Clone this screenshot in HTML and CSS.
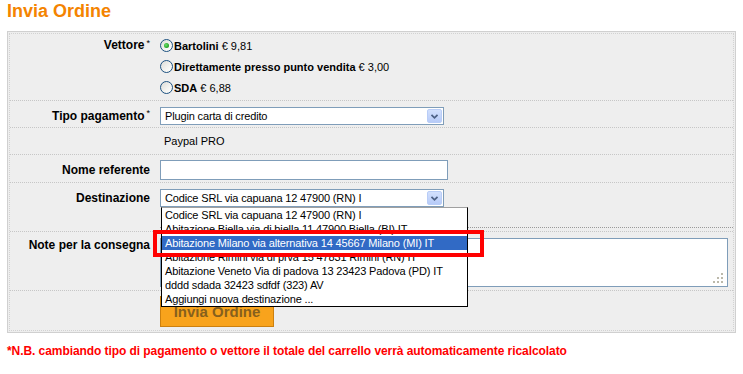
FILE: index.html
```html
<!DOCTYPE html>
<html lang="it">
<head>
    <meta charset="UTF-8">
    <title>Invia Ordine</title>
    <link rel="stylesheet" href="styles.css">
</head>
<body>
    <h1 class="title">Invia Ordine</h1>

    <div class="panel">
        <div class="panel-inner">
            <div class="row row-vettore">
                <div class="row-label">Vettore<span class="req">*</span></div>
                <div class="row-value">
                    <div class="radio-opt">
                        <span class="radio checked"><span class="radio-dot"></span></span>
                        <b>Bartolini</b>&nbsp;€ 9,81
                    </div>
                    <div class="radio-opt">
                        <span class="radio"></span>
                        <b>Direttamente presso punto vendita</b>&nbsp;€ 3,00
                    </div>
                    <div class="radio-opt">
                        <span class="radio"></span>
                        <b>SDA</b>&nbsp;€ 6,88
                    </div>
                </div>
            </div>

            <div class="row row-select">
                <div class="row-label">Tipo pagamento<span class="req">*</span></div>
                <div class="row-value">
                    <div class="select">
                        <span class="select-text">Plugin carta di credito</span>
                        <span class="select-arrow">
                            <svg width="15" height="15" viewBox="0 0 15 15"><polyline points="4,5.5 7.5,9 11,5.5" fill="none" stroke="#4d6185" stroke-width="2"/></svg>
                        </span>
                    </div>
                </div>
            </div>

            <div class="row row-info">
                <div class="row-label"></div>
                <div class="row-value">Paypal PRO</div>
            </div>

            <div class="row row-input">
                <div class="row-label">Nome referente</div>
                <div class="row-value">
                    <div class="input"></div>
                </div>
            </div>

            <div class="row row-dest">
                <div class="row-label">Destinazione</div>
                <div class="row-value">
                    <div class="select-wrap">
                        <div class="select">
                            <span class="select-text">Codice SRL via capuana 12 47900 (RN) I</span>
                            <span class="select-arrow">
                                <svg width="15" height="15" viewBox="0 0 15 15"><polyline points="4,5.5 7.5,9 11,5.5" fill="none" stroke="#4d6185" stroke-width="2"/></svg>
                            </span>
                        </div>
                        <ul class="dropdown">
                            <li>Codice SRL via capuana 12 47900 (RN) I</li>
                            <li>Abitazione Biella via di biella 11 47900 Biella (BI) IT</li>
                            <li class="active">Abitazione Milano via alternativa 14 45667 Milano (MI) IT</li>
                            <li>Abitazione Rimini via di prva 15 47831 Rimini (RN) IT</li>
                            <li>Abitazione Veneto Via di padova 13 23423 Padova (PD) IT</li>
                            <li>dddd sdada 32423 sdfdf (323) AV</li>
                            <li>Aggiungi nuova destinazione ...</li>
                        </ul>
                        <div class="highlight-box"></div>
                    </div>
                    <div class="dest-extra"></div>
                </div>
            </div>

            <div class="row row-note">
                <div class="row-label">Note per la consegna</div>
                <div class="row-value">
                    <div class="textarea">
                        <svg class="grip" width="11" height="11" viewBox="0 0 11 11">
                            <rect x="8" y="0" width="2" height="2" fill="#bcb9ab"/>
                            <rect x="4" y="4" width="2" height="2" fill="#bcb9ab"/>
                            <rect x="8" y="4" width="2" height="2" fill="#bcb9ab"/>
                            <rect x="0" y="8" width="2" height="2" fill="#bcb9ab"/>
                            <rect x="4" y="8" width="2" height="2" fill="#bcb9ab"/>
                            <rect x="8" y="8" width="2" height="2" fill="#bcb9ab"/>
                        </svg>
                    </div>
                </div>
            </div>

            <div class="row row-button">
                <div class="row-label"></div>
                <div class="row-value">
                    <button class="btn">Invia Ordine</button>
                </div>
            </div>
        </div>
    </div>

    <p class="note">*N.B. cambiando tipo di pagamento o vettore il totale del carrello verrà automaticamente ricalcolato</p>
</body>
</html>
```

FILE: styles.css
```css
body {
    margin: 0;
    padding: 0 7px;
    font-family: "Liberation Sans", Arial, sans-serif;
    color: #000;
    background-color: #fff;
}
.title {
    margin: 0 0 9px 0;
    font-size: 18px;
    line-height: 22px;
    font-weight: bold;
    color: #f48400;
}
.panel {
    border: 1px solid #d0d0d0;
    padding: 1px;
    background-color: #eeeeee;
}
.panel-inner {
    border: 1px dotted #d2d2d2;
}
.row {
    display: grid;
    grid-template-columns: 140px 1fr;
    column-gap: 10px;
    border-bottom: 1px dotted #c6c6c6;
}
.row:last-child {
    border-bottom: none;
}
.row-label {
    text-align: right;
    font-size: 12px;
    font-weight: bold;
}
.req {
    font-size: 9px;
    font-weight: normal;
    vertical-align: top;
    line-height: 12px;
    margin-left: 2px;
}
.row-value {
    font-size: 11px;
}

/* vettore */
.row-vettore {
    padding: 1px 0 2px 0;
}
.row-vettore .row-label {
    line-height: 21px;
}
.row-vettore .req {
    line-height: 16px;
}
.radio-opt {
    display: flex;
    align-items: center;
    height: 21px;
    white-space: nowrap;
}
.radio-opt b {
    margin-left: 1px;
}
.radio {
    display: flex;
    align-items: center;
    justify-content: center;
    width: 13px;
    height: 13px;
    box-sizing: border-box;
    border: 1px solid #1c5180;
    border-radius: 50%;
    background: linear-gradient(135deg, #dcdcd7 0%, #f4f4f1 60%, #ffffff 100%);
}
.radio-dot {
    width: 5px;
    height: 5px;
    border-radius: 50%;
    background: radial-gradient(circle at 40% 40%, #6ee06e 0%, #21a121 70%);
}

/* selects */
.row-select {
    padding: 6px 0 2px 0;
}
.row-select .row-label,
.row-dest .row-label {
    line-height: 18px;
}
.select-wrap {
    position: relative;
    width: 284px;
}
.select {
    display: flex;
    align-items: center;
    justify-content: space-between;
    width: 284px;
    height: 18px;
    box-sizing: border-box;
    border: 1px solid #7f9db9;
    background-color: #fff;
    padding: 0 1px 0 4px;
}
.select-text {
    font-size: 11px;
    letter-spacing: -0.15px;
    white-space: nowrap;
}
.select-arrow {
    display: flex;
    width: 15px;
    height: 14px;
    box-sizing: border-box;
    border: 1px solid #b9cdf7;
    border-radius: 2px;
    background: linear-gradient(#d2e0fd, #b7cbf8);
    align-items: center;
    justify-content: center;
    overflow: hidden;
}

/* info */
.row-info .row-value {
    line-height: 26px;
    padding-left: 4px;
}

/* input */
.row-input {
    padding: 5px 0 2px 0;
}
.row-input .row-label {
    line-height: 20px;
}
.input {
    width: 288px;
    height: 20px;
    box-sizing: border-box;
    border: 1px solid #7f9db9;
    background-color: #fff;
}

/* destinazione */
.row-dest {
    padding: 6px 0 3px 0;
}
.dest-extra {
    height: 20px;
    border-bottom: 1px dotted #9a9a9a;
}
.dropdown {
    position: absolute;
    top: 100%;
    left: 1px;
    z-index: 5;
    width: 307px;
    box-sizing: border-box;
    margin: 0;
    padding: 0;
    list-style: none;
    background-color: #fff;
    border: 1px solid #000;
    border-top-color: #a0a0a0;
}
.dropdown li {
    height: 14px;
    line-height: 14px;
    padding-left: 3px;
    font-size: 11px;
    letter-spacing: -0.15px;
    white-space: nowrap;
    overflow: hidden;
}
.dropdown li.active {
    background-color: #316ac5;
    color: #fff;
}
.highlight-box {
    position: absolute;
    left: -7px;
    top: 41px;
    z-index: 6;
    width: 331px;
    height: 27px;
    box-sizing: border-box;
    border: 4px solid #ff0000;
}

/* note */
.row-note {
    padding: 6px 0 3px 0;
}
.row-note .row-label {
    line-height: 14px;
}
.textarea {
    display: flex;
    align-items: flex-end;
    justify-content: flex-end;
    width: 568px;
    height: 49px;
    box-sizing: border-box;
    border: 1px solid #7f9db9;
    background-color: #fff;
    padding: 0 3px 2px 0;
}

/* button */
.row-button {
    padding: 5px 0 3px 0;
}
.btn {
    width: 114px;
    height: 31px;
    border: 1px solid #cc800f;
    background-color: #f8a31c;
    color: #86601d;
    font-family: "Liberation Sans", Arial, sans-serif;
    font-size: 15px;
    font-weight: bold;
    padding: 0;
}

.note {
    margin: 11px 0 0 0;
    font-size: 12px;
    line-height: 14px;
    font-weight: bold;
    letter-spacing: -0.07px;
    color: #ff0000;
}
```
